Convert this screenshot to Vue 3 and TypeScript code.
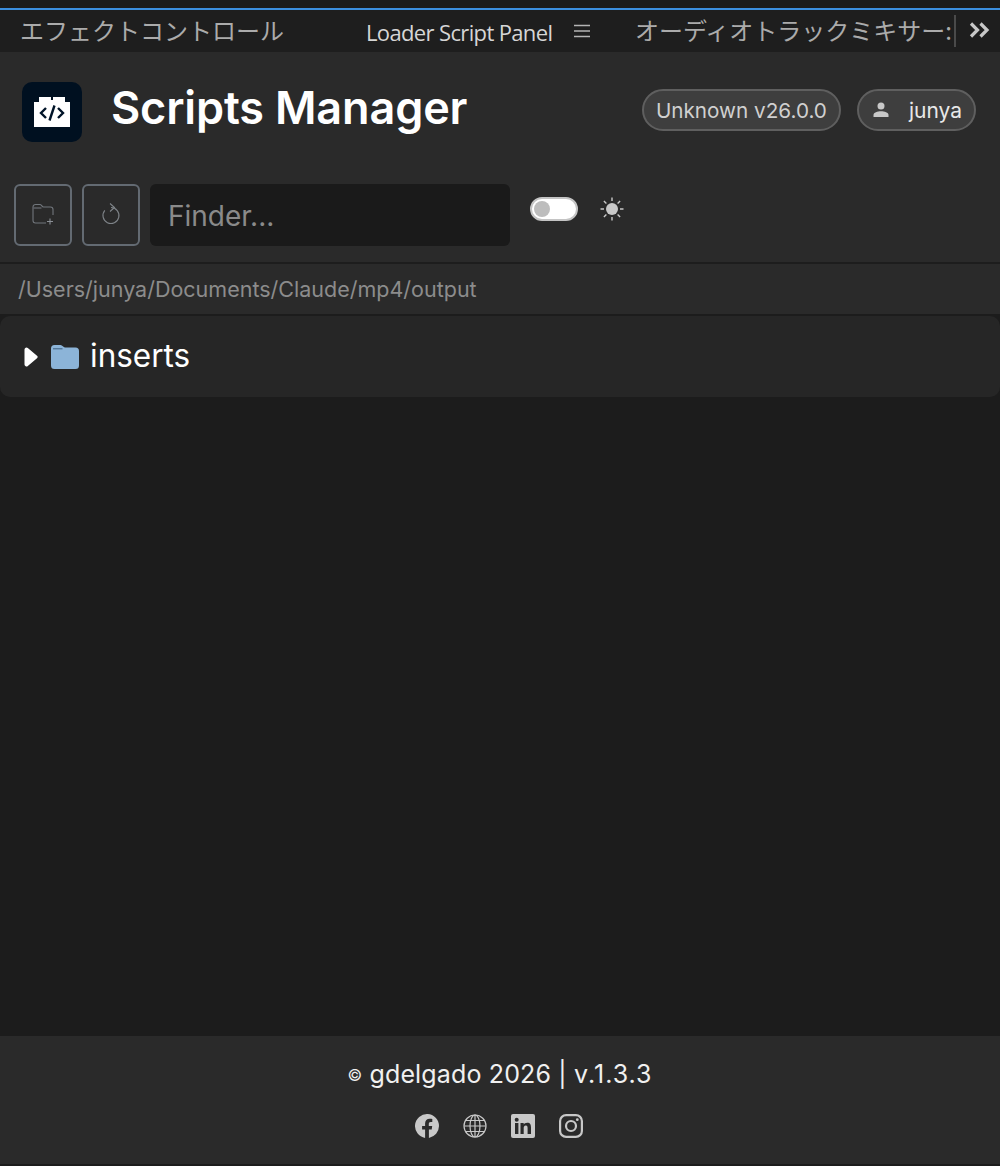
<script setup lang="ts">
const tabsLeft: string = 'エフェクトコントロール'
const tabsRight: string = 'オーディオトラックミキサー:'
</script>

<template>
  <div class="page">
    <div class="topgap"></div>
    <div class="tabs">
      <span class="tab-jp first">{{ tabsLeft }}</span>
      <span class="tab-active">Loader Script Panel</span>
      <svg class="menu" width="18" height="14" viewBox="0 0 18 14"><path d="M1 1.500h16M1 7h16M1 12.500h16" stroke="#b4b4b4" stroke-width="1.400" fill="none"/></svg>
      <span class="tab-jp last">{{ tabsRight }}</span>
      <span class="tab-sep"></span>
      <svg class="more" width="22" height="18" viewBox="0 0 22 18"><path d="M2 2.500 8.500 9 2 15.500M11.500 2.500 18 9l-6.500 6.500" stroke="#c8c8c8" stroke-width="3.200" fill="none"/></svg>
    </div>

    <header class="head">
      <div class="brand">
        <div class="logo">
          <svg width="36" height="30" viewBox="0 0 36 30">
            <path d="M0 5h5V0h12v3h2V0h12v5h5v25H0z" fill="#fff" />
            <path d="M12 11l-5 5 5 5M24 11l5 5-5 5M20.500 8.500l-5 15" stroke="#001428" stroke-width="2.400" fill="none"/>
          </svg>
        </div>
        <h1>Scripts Manager</h1>
      </div>
      <div class="pills">
        <span class="pill version">Unknown v26.0.0</span>
        <span class="pill user">
          <svg width="16" height="16" viewBox="0 0 16 16"><circle cx="8" cy="4" r="3.500" fill="#c8c8c8"/><path d="M0.500 15v-2C0.500 10.500 4.500 9.300 8 9.300s7.500 1.200 7.500 3.700v2z" fill="#c8c8c8"/></svg>
          <span class="uname">junya</span>
        </span>
      </div>
    </header>

    <div class="toolbar">
      <button class="tool">
        <svg width="24" height="24" viewBox="0 0 24 24" fill="none" stroke="#71767c" stroke-width="1.100">
          <path d="M15 20H4.500a2.500 2.500 0 0 1-2.500-2.500V4a2.500 2.500 0 0 1 2.500-2.500h4.500c1.500 0 1.800 2.500 3.500 2.500h7A2.500 2.500 0 0 1 22 6.500V12"/>
          <path d="M2.500 5h8"/>
          <path d="M19 15.500v6M16 18.500h6" stroke="#8a8f95"/>
        </svg>
      </button>
      <button class="tool">
        <svg width="20" height="24" viewBox="0 0 20 24" fill="none" stroke="#7f8489" stroke-width="1.100">
          <path d="M10 4.500A8 8 0 1 1 3.800 7.400"/>
          <path d="M9 .5l4.500 4L9 8.500" />
        </svg>
      </button>
      <div class="finder">Finder...</div>
      <div class="switch"><span class="knob"></span></div>
      <svg class="sun" width="24" height="24" viewBox="0 0 24 24">
        <circle cx="12" cy="12" r="6" fill="#c8c8c8"/>
        <path d="M12 0.500v3.500M12 20v3.500M0.500 12H4M20 12h3.500M3.900 3.900l2.500 2.500M17.600 17.600l2.500 2.500M3.900 20.100l2.500-2.500M17.600 6.400l2.500-2.500" stroke="#c8c8c8" stroke-width="1.400"/>
      </svg>
    </div>

    <div class="path">/Users/junya/Documents/Claude/mp4/output</div>

    <div class="tree">
      <svg class="caret" width="14" height="20" viewBox="0 0 14 20"><path d="M0.500 2.500v15a2 2 0 0 0 3.300 1.500L13 11.200a1.600 1.600 0 0 0 0-2.400L3.800 1A2 2 0 0 0 .5 2.500z" fill="#fff"/></svg>
      <svg class="folder" width="30" height="26" viewBox="0 0 30 26">
        <path d="M1 4.500A3.500 3.500 0 0 1 4.500 1h6c2 0 2.800 2.500 4.500 2.500h10.500A3.500 3.500 0 0 1 29 7v14.500a3.500 3.500 0 0 1-3.500 3.500h-21A3.500 3.500 0 0 1 1 21.500z" fill="#8cb4d8"/>
        <path d="M3 4.800h9.500" stroke="#3c5f80" stroke-width="1" fill="none"/>
      </svg>
      <span class="tname">inserts</span>
    </div>

    <main class="body"></main>

    <footer class="foot">
      <div class="copy"><span class="c">©</span> gdelgado 2026 | <span class="ver">v.1.3.3</span></div>
      <div class="social">
        <svg width="24" height="24" viewBox="0 0 24 24"><path fill="#c8c8c8" d="M24 12a12 12 0 1 0-13.900 11.900v-8.400H7.100V12h3V9.400c0-3 1.800-4.700 4.500-4.700 1.300 0 2.700.2 2.700.2v3h-1.500c-1.500 0-2 .9-2 1.900V12h3.400l-.5 3.500h-2.800v8.400A12 12 0 0 0 24 12z"/></svg>
        <svg width="24" height="24" viewBox="0 0 24 24" fill="none" stroke="#c8c8c8" stroke-width="1.200"><circle cx="12" cy="12" r="11"/><ellipse cx="12" cy="12" rx="5" ry="11"/><path d="M12 1v22M1 12h22M2.500 6.500h19M2.500 17.500h19"/></svg>
        <svg width="24" height="24" viewBox="0 0 24 24"><rect width="24" height="24" rx="2" fill="#c8c8c8"/><rect x="4" y="9" width="3.400" height="11" fill="#2a2a2a"/><circle cx="5.700" cy="5.700" r="2" fill="#2a2a2a"/><path fill="#2a2a2a" d="M9.500 9h3.200v1.500c.6-1 1.800-1.800 3.500-1.800 3.200 0 3.800 2.100 3.800 4.900V20h-3.400v-5.600c0-1.400 0-3-1.800-3s-2.100 1.400-2.100 2.900V20H9.500z"/></svg>
        <svg width="24" height="24" viewBox="0 0 24 24" fill="none" stroke="#c8c8c8" stroke-width="2.200"><rect x="1.100" y="1.100" width="21.800" height="21.800" rx="6"/><circle cx="12" cy="12" r="5"/><circle cx="18.300" cy="5.700" r="1.400" fill="#c8c8c8" stroke="none"/></svg>
      </div>
    </footer>
    <div class="bottomgap"></div>
  </div>
</template>

<style>
html, body { margin: 0; background: #1c1c1c; }
</style>

<style scoped>
.page {
  width: 1000px;
  height: 1166px;
  display: flex;
  flex-direction: column;
  background: #1c1c1c;
  font-family: Inter, "Noto Sans CJK JP", sans-serif;
  overflow: hidden;
}
.topgap { height: 8px; background: #1b1b1b; border-bottom: 2px solid #3b8ede; }
.tabs {
  height: 42px;
  display: flex;
  align-items: center;
  background: #1e1e1e;
  white-space: nowrap;
}
.tab-jp {
  font-family: "Noto Sans CJK JP", sans-serif;
  font-size: 24px;
  line-height: 38px;
  margin-bottom: 2px;
  color: #ababab;
  font-weight: 400;
}
.first { margin-left: 20px; width: 346px; }
.tab-active {
  font-family: "Open Sans", sans-serif;
  font-size: 22px;
  font-weight: 500;
  color: #d6d6d6;
  width: 207px;
  letter-spacing: -0.640px;
  padding-top: 2px;
}
.menu { width: 18px; margin-right: 45px; }
.last { width: 318px; overflow: hidden; margin-left: -1px; }
.tab-sep { width: 2px; height: 32px; background: #4a4a4a; margin: 0 13px 0 1px; }
.more { flex: none; margin-bottom: 2px; }
.head {
  height: 112px;
  padding: 30px 24px 20px 22px;
  box-sizing: border-box;
  display: flex;
  justify-content: space-between;
  background: #2a2a2a;
}
.brand { display: flex; align-items: flex-start; gap: 29px; }
.logo {
  width: 60px;
  height: 60px;
  border-radius: 10px;
  background: #001020;
  display: flex;
  align-items: center;
  justify-content: center;
}
h1 {
  margin: 0;
  font-size: 45px;
  line-height: 52px;
  font-weight: 600;
  color: #fff;
  letter-spacing: -0.150px;
}
.pills { display: flex; gap: 16px; padding-top: 7px; align-items: flex-start; }
.pill {
  height: 42px;
  box-sizing: border-box;
  border: 2px solid #5f5f5f;
  border-radius: 21px;
  background: #3e3e3e;
  color: #d0d0d0;
  font-size: 21px;
  display: flex;
  align-items: center;
  padding: 0 12px;
}
.version { font-size: 20.700px; }
.user { padding: 0 12px 0 14px; gap: 20px; }
.uname { color: #e8e8e8; }
.toolbar {
  height: 100px;
  padding: 20px 14px 16px;
  box-sizing: border-box;
  background: #2a2a2a;
  border-bottom: 2px solid #1d1d1d;
  display: flex;
  align-items: flex-start;
  gap: 10px;
}
.tool {
  width: 58px;
  height: 62px;
  padding: 0;
  border: 2px solid #636a72;
  border-radius: 6px;
  background: transparent;
  display: flex;
  align-items: center;
  justify-content: center;
}
.finder {
  width: 360px;
  height: 62px;
  box-sizing: border-box;
  border-radius: 6px;
  background: #1a1a1a;
  color: #8a8a8a;
  font-size: 28px;
  line-height: 64px;
  padding-left: 18px;
}
.switch {
  width: 48px;
  height: 24px;
  box-sizing: border-box;
  margin: 13px 0 0 10px;
  border-radius: 12px;
  background: #fff;
  border: 2px solid #c4c4c4;
  padding: 2px;
}
.knob { display: block; width: 16px; height: 16px; border-radius: 50%; background: #bdbdbd; }
.sun { margin: 13px 0 0 12px; }
.path {
  height: 50px;
  line-height: 50px;
  padding-left: 18px;
  background: #2a2a2a;
  color: #8c8c8c;
  font-size: 21.500px;
  box-sizing: border-box;
}
.tree {
  margin-top: 2px;
  height: 81px;
  background: #262626;
  border-radius: 10px;
  display: flex;
  align-items: center;
  padding-left: 24px;
}
.caret { margin-right: 12px; }
.tname { color: #fff; font-size: 31.500px; margin-left: 10px; padding-bottom: 2px; }
.body { flex: 1; background: #1c1c1c; }
.foot {
  height: 128px;
  background: #2a2a2a;
  display: flex;
  flex-direction: column;
  align-items: center;
  padding-top: 20px;
  box-sizing: border-box;
}
.copy { color: #f0f0f0; font-size: 25px; line-height: 36px; letter-spacing: 0.150px; }
.c { font-size: 16px; position: relative; top: -2px; }
.ver { letter-spacing: 1px; }
.social { display: flex; gap: 24px; margin-top: 19px; padding-right: 2px; }
.bottomgap { height: 2px; background: #1c1c1c; }
</style>
